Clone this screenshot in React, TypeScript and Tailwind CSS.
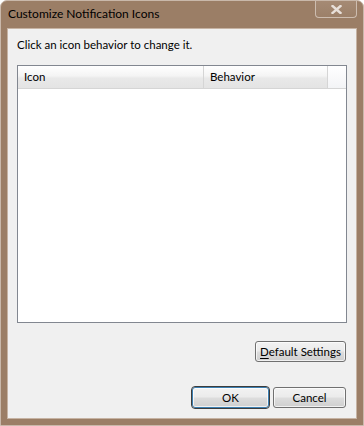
import type { ReactNode } from "react";

const font = { fontFamily: 'Lato, "Noto Sans", sans-serif' };

function DialogButton({
  children,
  isDefault = false,
  className = "",
}: {
  children: ReactNode;
  isDefault?: boolean;
  className?: string;
}) {
  return (
    <button
      className={`flex h-[21px] items-center justify-center whitespace-nowrap rounded-[3px] border bg-[linear-gradient(#f2f2f2_0%,#ebebeb_48%,#dddddd_52%,#cfcfcf_100%)] text-[11.5px] leading-none text-black shadow-[inset_0_0_0_1px_rgba(255,255,255,0.7)] ${
        isDefault ? "border-[#3c7fb1] outline outline-1 outline-[#3c3c3c]" : "border-[#707070]"
      } ${className}`}
    >
      {children}
    </button>
  );
}

export default function App() {
  return (
    <div className="h-[426px] w-[364px] bg-white" style={font}>
      <div className="flex h-full w-full flex-col rounded-t-[7px] border border-[#c9b8aa] bg-[#9b7e66]">
        <div className="flex h-[27px] shrink-0 items-start justify-between">
          <span className="pl-[7px] pt-[5px] text-[12px] leading-[16px] text-black">
            Customize Notification Icons
          </span>
          <div className="mr-[6px] flex h-[17px] w-[42px] items-center justify-center rounded-b-[4px] border border-t-0 border-[#cdbdb0] bg-[linear-gradient(#a58a74,#9c8069)]">
            <svg width="11" height="9" viewBox="0 0 11 9">
              <path d="M1.5 1 L9.5 8 M9.5 1 L1.5 8" stroke="#e8e0da" strokeWidth="2.4" strokeLinecap="square" />
            </svg>
          </div>
        </div>
        <div className="mx-[6px] mb-[6px] flex flex-1 flex-col border border-[#c6b3a3] bg-[#f0f0f0] px-[9px] pb-[10px] pt-[8px]">
          <p className="h-[16px] text-[11.5px] leading-[16px] text-black">Click an icon behavior to change it.</p>
          <div className="mt-[12px] flex h-[258px] flex-col border border-[#828790] bg-white">
            <div className="flex h-[23px] border-b border-[#d5d5d5] bg-[linear-gradient(#ffffff_0%,#f4f4f4_45%,#e9e9e9_55%,#e4e4e4_100%)] text-[11.5px] leading-none text-black">
              <div className="flex w-[186px] items-center border-r border-[#d5d5d5] pl-[6px]">Icon</div>
              <div className="flex w-[124px] items-center border-r border-[#d5d5d5] pl-[6px]">Behavior</div>
              <div className="flex-1 bg-[linear-gradient(#ffffff,#f3f4f6)]" />
            </div>
          </div>
          <div className="mt-[18px] flex justify-end pr-[1px]">
            <DialogButton className="w-[91px]">
              <span>
                <span className="underline underline-offset-2">D</span>efault Settings
              </span>
            </DialogButton>
          </div>
          <div className="mt-[25px] flex justify-end gap-[4px] pr-[1px]">
            <DialogButton isDefault className="w-[77px]">
              OK
            </DialogButton>
            <DialogButton className="w-[73px]">Cancel</DialogButton>
          </div>
        </div>
      </div>
    </div>
  );
}
